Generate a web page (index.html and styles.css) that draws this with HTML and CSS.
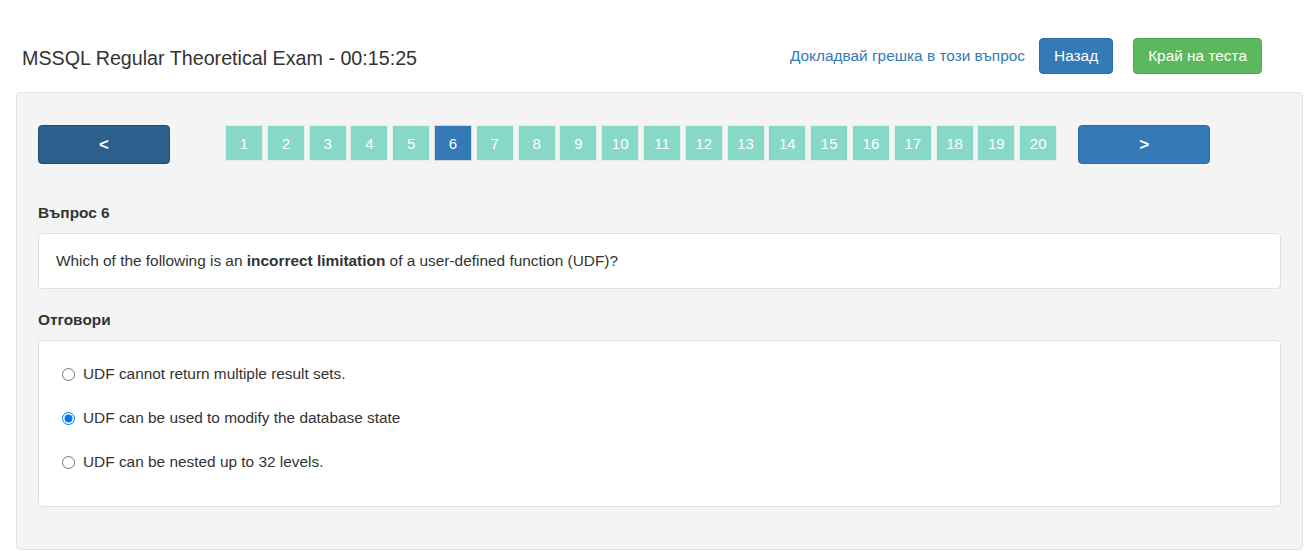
FILE: index.html
```html
<!DOCTYPE html>
<html lang="bg">
<head>
<meta charset="utf-8">
<title>MSSQL Regular Theoretical Exam</title>
<link rel="stylesheet" href="styles.css">
</head>
<body>
<header class="top">
  <h3 class="title">MSSQL Regular Theoretical Exam - 00:15:25</h3>
  <div class="actions">
    <a class="report" href="#">Докладвай грешка в този въпрос</a>
    <a class="btn btn-blue" href="#">Назад</a>
    <a class="btn btn-green" href="#">Край на теста</a>
  </div>
</header>
<main class="panel">
  <nav class="nav">
    <a class="arrow arrow-prev" href="#">&lt;</a>
    <div class="pages">
      <a class="page" href="#">1</a>
      <a class="page" href="#">2</a>
      <a class="page" href="#">3</a>
      <a class="page" href="#">4</a>
      <a class="page" href="#">5</a>
      <a class="page active" href="#">6</a>
      <a class="page" href="#">7</a>
      <a class="page" href="#">8</a>
      <a class="page" href="#">9</a>
      <a class="page" href="#">10</a>
      <a class="page" href="#">11</a>
      <a class="page" href="#">12</a>
      <a class="page" href="#">13</a>
      <a class="page" href="#">14</a>
      <a class="page" href="#">15</a>
      <a class="page" href="#">16</a>
      <a class="page" href="#">17</a>
      <a class="page" href="#">18</a>
      <a class="page" href="#">19</a>
      <a class="page" href="#">20</a>
    </div>
    <a class="arrow arrow-next" href="#">&gt;</a>
  </nav>
  <div class="label label-q">Въпрос 6</div>
  <div class="card card-q">Which of the following is an <strong>incorrect limitation</strong> of a user-defined function (UDF)?</div>
  <div class="label label-a">Отговори</div>
  <div class="card card-a">
    <label class="answer"><input type="radio" name="a" class="radio"><span>UDF cannot return multiple result sets.</span></label>
    <label class="answer"><input type="radio" name="a" class="radio" checked><span>UDF can be used to modify the database state</span></label>
    <label class="answer"><input type="radio" name="a" class="radio"><span>UDF can be nested up to 32 levels.</span></label>
  </div>
</main>
</body>
</html>
```

FILE: styles.css
```css
* { box-sizing: border-box; }
html, body {
  margin: 0;
  padding: 0;
  background: #fff;
  font-family: "Liberation Sans", Arial, sans-serif;
  color: #333;
  font-size: 15.4px;
}
.top {
  display: flex;
  align-items: center;
  justify-content: space-between;
  padding: 38px 47px 0 22px;
  height: 74px;
  margin-bottom: 18px;
}
.title {
  margin: 0;
  padding-top: 5px;
  font-size: 19.7px;
  font-weight: normal;
  color: #333;
  line-height: 1.1;
}
.actions {
  display: flex;
  align-items: center;
}
.report {
  color: #337ab7;
  text-decoration: none;
  font-size: 15.4px;
  margin-right: 14px;
}
.btn {
  display: inline-flex;
  align-items: center;
  justify-content: center;
  height: 36px;
  padding: 0 14px;
  border-radius: 4px;
  color: #fff;
  text-decoration: none;
  font-size: 15.4px;
  border: 1px solid transparent;
}
.btn-blue {
  background: #337ab7;
  border-color: #2e6da4;
  margin-right: 20px;
}
.btn-green {
  background: #5cb85c;
  border-color: #4cae4c;
}
.panel {
  margin: 0 6px 8px 16px;
  background: #f4f4f4;
  border: 1px solid #e3e3e3;
  border-radius: 4px;
  padding: 32px 21px 42px 21px;
}
.nav {
  display: flex;
  align-items: flex-start;
}
.arrow {
  width: 132px;
  height: 39px;
  display: flex;
  align-items: center;
  justify-content: center;
  border-radius: 4px;
  color: #fff;
  text-decoration: none;
  font-weight: bold;
  font-size: 17px;
}
.arrow-prev {
  background: #2b5f8c;
  border: 1px solid #204d74;
  margin-right: 55px;
}
.arrow-next {
  background: #337ab7;
  border: 1px solid #2e6da4;
  margin-left: 21px;
}
.pages {
  display: flex;
  gap: 3.8px;
}
.page {
  width: 38px;
  height: 36px;
  display: flex;
  align-items: center;
  justify-content: center;
  background: #88d8c8;
  border: 1px solid #e4eeeb;
  color: #fff;
  text-decoration: none;
  font-size: 15px;
}
.page.active {
  background: #337ab7;
  border-color: #d6d6d6;
}
.label {
  font-weight: bold;
  font-size: 15.4px;
  line-height: 20px;
}
.label-q { margin-top: 39px; margin-bottom: 10px; }
.label-a { margin-top: 21px; margin-bottom: 10px; }
.card {
  background: #fff;
  border: 1px solid #e0e0e0;
  border-radius: 4px;
}
.card-q {
  padding: 17px 17px;
  line-height: 20px;
  font-size: 15.4px;
}
.card-q strong { font-weight: bold; }
.card-a {
  padding: 11px 23px 22px 23px;
}
.answer {
  display: flex;
  align-items: center;
  height: 44px;
  font-size: 15.4px;
  cursor: pointer;
}
.radio {
  margin: 0 8px 0 0;
  width: 13px;
  height: 13px;
}
```
